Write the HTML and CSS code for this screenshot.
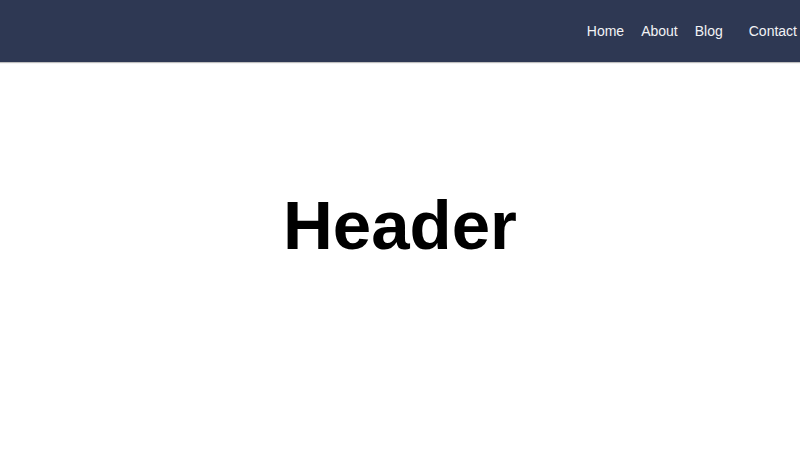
FILE: index.html
```html
<!DOCTYPE html>
<html>
<head>
<meta charset="utf-8">
<link rel="stylesheet" href="styles.css">
</head>
<body>
<nav class="topbar">
  <ul class="menu">
    <li><a href="#">Home</a></li>
    <li><a href="#">About</a></li>
    <li><a href="#">Blog</a></li>
    <li class="last"><a href="#">Contact</a></li>
  </ul>
</nav>
<main class="hero">
  <h1 class="title">Header</h1>
</main>
</body>
</html>
```
FILE: styles.css
```css
* { box-sizing: border-box; }
html, body { margin: 0; padding: 0; background: #fff; }
body { font-family: "Liberation Sans", Arial, sans-serif; }
.topbar {
  height: 62px;
  background: #2e3853;
  display: flex;
  justify-content: flex-end;
  align-items: center;
  padding-right: 3px;
  box-shadow: 0 1px 1px rgba(0,0,0,0.25);
}
.menu {
  list-style: none;
  margin: 0;
  padding: 0;
  display: flex;
  align-items: center;
  gap: 17px;
}
.menu .last { margin-left: 9px; }
.menu a {
  color: #f2f3f6;
  text-decoration: none;
  font-size: 14px;
}
.hero {
  display: flex;
  justify-content: center;
  padding-top: 124px;
}
.title {
  margin: 0;
  font-size: 69px;
  font-weight: bold;
  color: #000;
}
```
